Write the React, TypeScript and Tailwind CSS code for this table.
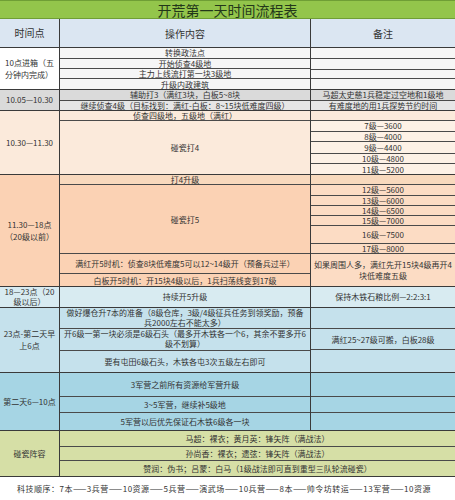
import React from 'react';

type Sub = { h: string; text?: React.ReactNode; cls?: string };

function Stack({ rows, className }: { rows: Sub[]; className: string }) {
  return (
    <div className={`flex flex-col ${className}`}>
      {rows.map((r, i) => (
        <div
          key={i}
          className={`${r.h} flex items-center justify-center text-center whitespace-nowrap leading-[9px] ${
            i < rows.length - 1 ? 'border-b border-[#4a4a4a]' : ''
          } ${r.cls ?? ''}`}
        >
          {r.text}
        </div>
      ))}
    </div>
  );
}

const col1 = 'w-[60px] shrink-0 border-r border-[#3a3a3a] flex items-center justify-center text-center leading-[12px]';
const col2 = 'w-[251px] shrink-0 border-r border-[#3a3a3a]';

export default function App() {
  return (
    <div className="w-[455px] h-[500px] bg-white text-[8px] text-[#333] [font-family:'Noto_Sans_CJK_SC','Noto_Sans',sans-serif] overflow-hidden">
      {/* title */}
      <div className="h-[19px] bg-[#93c54b] border-t border-[#6f9e35] border-b border-[#5d7f33] flex items-center justify-center text-[14px] leading-none text-[#23371a]">
        开荒第一天时间流程表
      </div>

      {/* header */}
      <div className="flex h-[29px] bg-[#dbe6f2] border-b border-[#3a3a3a] text-[10px]">
        <div className={col1}>时间点</div>
        <div className={`${col2} flex items-center justify-center`}>操作内容</div>
        <div className="flex-1 flex items-center justify-center">备注</div>
      </div>

      {/* 10点进箱 */}
      <div className="flex h-[42px] bg-[#f6f6f6] border-b border-[#3a3a3a]">
        <div className={`${col1} !justify-start pl-[5px] text-left bg-white`}>
          10点进箱（五
          <br />
          分钟内完成）
        </div>
        <Stack
          className={col2}
          rows={[
            { h: 'h-[11px]', text: '转换政法点' },
            { h: 'h-[11px]', text: '开始侦查4级地' },
            { h: 'h-[10px]', text: '主力上线流打第一块3级地' },
            { h: 'h-[10px]', text: '升级内政建筑' },
          ]}
        />
        <Stack
          className="flex-1"
          rows={[{ h: 'h-[11px]' }, { h: 'h-[11px]' }, { h: 'h-[10px]' }, { h: 'h-[10px]' }]}
        />
      </div>

      {/* 10.05 */}
      <div className="flex h-[21px] bg-[#dadada] border-b border-[#3a3a3a]">
        <div className={col1}>10.05—10.30</div>
        <Stack
          className={col2}
          rows={[
            { h: 'h-[11px]', text: '辅助打3（满红3块，白板5~8块' },
            { h: 'h-[10px]', text: '继续侦查4级（目标找到：满红-白板：8~15块低难度四级）', cls: 'bg-[#e6e6e6]' },
          ]}
        />
        <Stack
          className="flex-1"
          rows={[
            { h: 'h-[11px]', text: '马超太史慈1兵稳定过空地和1级地' },
            { h: 'h-[10px]', text: '有难度地的用1兵探势节约时间', cls: 'bg-[#e6e6e6]' },
          ]}
        />
      </div>

      {/* 10.30 */}
      <div className="flex h-[64px] bg-[#fbeadb] border-b border-[#3a3a3a]">
        <div className={col1}>10.30—11.30</div>
        <Stack
          className={col2}
          rows={[
            { h: 'h-[10px]', text: '侦查四级地，五级地（满红）' },
            { h: 'h-[54px]', text: '碰瓷打4' },
          ]}
        />
        <Stack
          className="flex-1 bg-[#fdf1e6]"
          rows={[
            { h: 'h-[10px]', cls: 'bg-[#fbeadb]' },
            { h: 'h-[11px]', text: '7级—3600' },
            { h: 'h-[11px]', text: '8级—4000' },
            { h: 'h-[12px]', text: '9级—4400' },
            { h: 'h-[10px]', text: '10级—4800' },
            { h: 'h-[10px]', text: '11级—5200' },
          ]}
        />
      </div>

      {/* 11.30 */}
      <div className="flex h-[112px] bg-[#fbd2b4] border-b border-[#3a3a3a]">
        <div className={col1}>
          11.30—18点
          <br />
          （20级以前）
        </div>
        <Stack
          className={col2}
          rows={[
            { h: 'h-[10px]', text: '打4升级', cls: 'bg-[#f8d9bd]' },
            { h: 'h-[70px]', text: '碰瓷打5' },
            { h: 'h-[20px]', text: '满红开5时机：侦查8块低难度5可以12~14级开（预备兵过半）' },
            { h: 'h-[12px]', text: '白板开5时机：开15块4级以后，1兵扫荡线变到17级' },
          ]}
        />
        <Stack
          className="flex-1 bg-[#fcdcc4]"
          rows={[
            { h: 'h-[10px]', cls: 'bg-[#f8d9bd]' },
            { h: 'h-[11px]', text: '12级—5600' },
            { h: 'h-[10px]', text: '13级—6000' },
            { h: 'h-[10px]', text: '14级—6500' },
            { h: 'h-[10px]', text: '15级—7000' },
            { h: 'h-[19px]', text: '16级—7500' },
            { h: 'h-[10px]', text: '17级—8000' },
            {
              h: 'h-[32px]',
              text: (
                <span className="block leading-[11px]">
                  如果周围人多，满红先开15块4级再开4
                  <br />
                  块低难度五级
                </span>
              ),
            },
          ]}
        />
      </div>

      {/* 18-23 */}
      <div className="flex h-[21px] bg-[#d8ebf1] border-b border-[#3a3a3a]">
        <div className={`${col1} !leading-[10px]`}>
          18—23点（20
          <br />
          级以后）
        </div>
        <div className={`${col2} flex items-center justify-center`}>持续开5升级</div>
        <div className="flex-1 flex items-center justify-center">保持木铁石粮比例—2:2:3:1</div>
      </div>

      {/* 23点 */}
      <div className="flex h-[65px] bg-[#c5e1ec] border-b border-[#3a3a3a]">
        <div className={col1}>
          23点-第二天早
          <br />
          上6点
        </div>
        <Stack
          className={col2}
          rows={[
            {
              h: 'h-[21px]',
              text: (
                <span className="block leading-[10px]">
                  做好爆仓升7本的准备（8级仓库，3级/4级征兵任务到领奖励，预备
                  <br />
                  兵2000左右不能太多）
                </span>
              ),
            },
            {
              h: 'h-[22px]',
              text: (
                <span className="block leading-[10px]">
                  开6级一第一块必须是6级石头（最多开木铁各一个6，其余不要多开6
                  <br />
                  级不划算）
                </span>
              ),
            },
            { h: 'h-[22px]', text: '要有屯田6级石头，木铁各屯3次五级左右即可' },
          ]}
        />
        <Stack
          className="flex-1"
          rows={[
            { h: 'h-[21px]' },
            { h: 'h-[22px]', text: '满红25~27级可搬，白板28级' },
            { h: 'h-[22px]' },
          ]}
        />
      </div>

      {/* 第二天 */}
      <div className="flex h-[58px] bg-[#a6d5e4] border-b border-[#3a3a3a]">
        <div className={col1}>第二天6—10点</div>
        <Stack
          className={col2}
          rows={[
            { h: 'h-[24px]', text: '3军营之前所有资源给军营升级' },
            { h: 'h-[17px]', text: '3~5军营，继续补5级地' },
            { h: 'h-[17px]', text: '5军营以后优先保证石木铁6级各一块' },
          ]}
        />
        <Stack className="flex-1" rows={[{ h: 'h-[24px]' }, { h: 'h-[17px]' }, { h: 'h-[17px]' }]} />
      </div>

      {/* 碰瓷阵容 */}
      <div className="flex h-[46px] bg-[#d6dfa6] border-b border-[#3a3a3a]">
        <div className={col1}>碰瓷阵容</div>
        <Stack
          className="flex-1"
          rows={[
            { h: 'h-[16px]', text: '马超：裸衣；黄月英：锋矢阵（满战法）' },
            { h: 'h-[15px]', text: '孙尚香：裸衣；遗弦：锋矢阵（满战法）' },
            { h: 'h-[15px]', text: '赞润：伪书；吕蒙：白马（1级战法即可直到重型三队轮流碰瓷）' },
          ]}
        />
      </div>

      {/* footer */}
      <div className="h-[23px] flex items-center pl-[17px] whitespace-nowrap tracking-[0.5px]">
        科技顺序：7本——3兵营——10资源——5兵营——演武场——10兵营——8本——帅令坊转运——13军营——10资源
      </div>
    </div>
  );
}
